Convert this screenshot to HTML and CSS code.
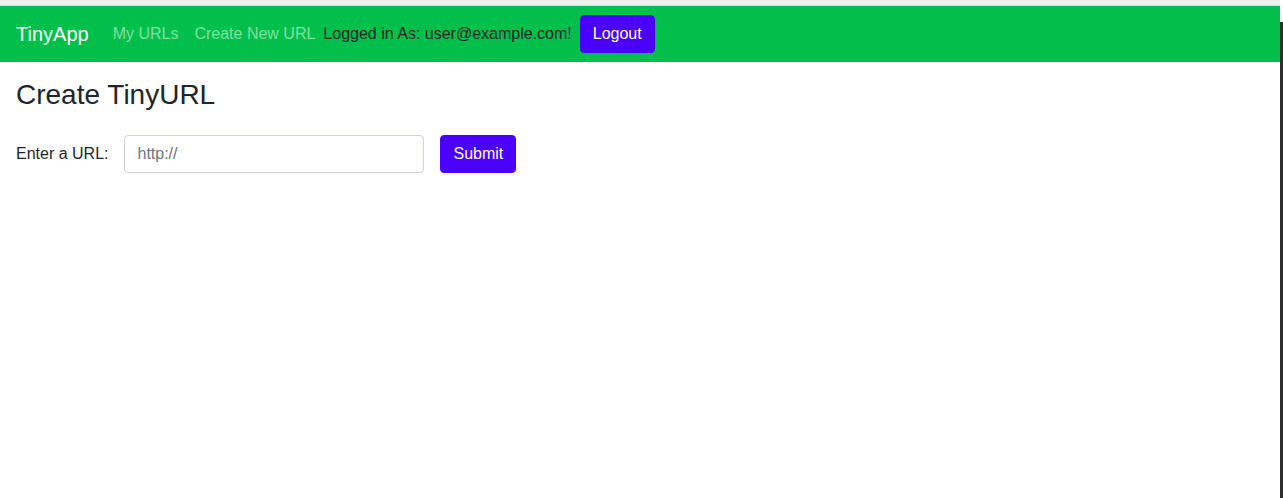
FILE: index.html
```html
<!DOCTYPE html>
<html lang="en">
<head>
<meta charset="utf-8">
<title>TinyApp</title>
<link rel="stylesheet" href="styles.css">
</head>
<body>
<div class="page">
  <div class="topstrip"></div>
  <nav class="navbar">
    <a class="brand" href="#">TinyApp</a>
    <a class="nav-link" href="#">My URLs</a>
    <a class="nav-link" href="#">Create New URL</a>
    <span class="user">Logged in As: user@example.com!</span>
    <button class="btn" type="button">Logout</button>
  </nav>
  <main class="content">
    <h3 class="title">Create TinyURL</h3>
    <form class="url-form">
      <label class="label" for="longURL">Enter a URL:</label>
      <input class="input" id="longURL" type="text" placeholder="http://">
      <button class="btn" type="button">Submit</button>
    </form>
  </main>
</div>
<div class="edge"></div>
</body>
</html>
```

FILE: styles.css
```css
* { box-sizing: border-box; }
html, body { margin: 0; padding: 0; background: #fff; }
body {
  font-family: "Liberation Sans", Arial, sans-serif;
  font-size: 16px;
  line-height: 1.5;
  color: #212529;
}
.page { width: 1280px; }
.topstrip {
  height: 6px;
  background: #efeeec;
  border-bottom: 1px solid #dcdcda;
}
.navbar {
  display: flex;
  align-items: center;
  height: 56px;
  padding: 0 16px;
  background: #00bf4b;
}
.brand {
  font-size: 20px;
  color: #fff;
  text-decoration: none;
  margin-right: 16px;
  line-height: 30px;
}
.nav-link {
  color: rgba(255, 255, 255, 0.5);
  text-decoration: none;
  padding: 0 8px;
}
.user { color: #212529; }
.btn {
  font-family: inherit;
  font-size: 16px;
  line-height: 24px;
  color: #fff;
  background: #4b00ff;
  border: 1px solid #4b00ff;
  border-radius: 4px;
  padding: 6px 12px;
  cursor: pointer;
}
.navbar .btn { margin-left: 8px; }
.content { padding: 16px 16px 0; }
.title {
  margin: 0 0 23px;
  font-size: 28px;
  font-weight: 400;
  line-height: 1.2;
}
.url-form {
  display: flex;
  align-items: center;
}
.label { margin-right: 16px; }
.input {
  width: 300px;
  height: 38px;
  padding: 6px 12px;
  font-family: inherit;
  font-size: 16px;
  color: #495057;
  border: 1px solid #ced4da;
  border-radius: 4px;
  margin-right: 16px;
}
.input::placeholder { color: #6c757d; }
.edge {
  position: fixed;
  top: 22px;
  right: 0;
  bottom: 0;
  width: 3px;
  background: #2e2e2e;
}
```
